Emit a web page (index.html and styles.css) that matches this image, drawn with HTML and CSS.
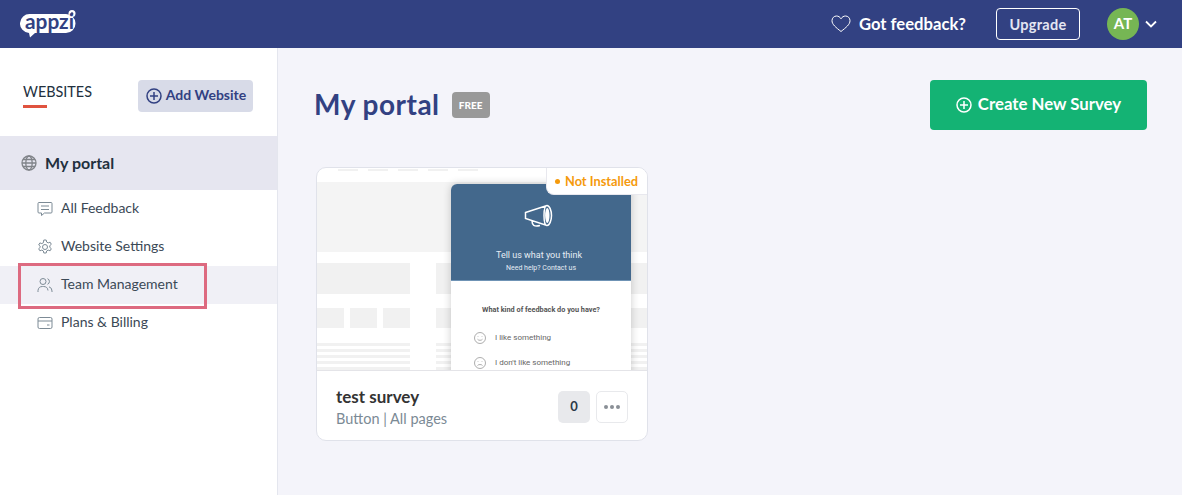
FILE: index.html
```html
<!DOCTYPE html>
<html lang="en">
<head>
    <meta charset="UTF-8">
    <title>My portal</title>
    <link rel="stylesheet" href="styles.css">
</head>
<body>
    <header class="topbar">
        <svg class="logo" viewBox="0 0 58 30">
            <path d="M10 5h36a9.500 9.500 0 0 1 9.500 9.500v0a9.500 9.500 0 0 1-9.500 9.500H15l-5 4.500-1-4.500a9.500 9.500 0 0 1 1-19z" fill="#fff"/>
            <circle cx="52" cy="4.500" r="3.500" fill="#fff"/>
            <circle cx="52" cy="4.500" r="1.300" fill="#324182"/>
            <text x="5" y="19.500" class="logo-text" textLength="49" lengthAdjust="spacingAndGlyphs">appzi</text>
        </svg>
        <div class="topbar-right">
            <svg class="heart" viewBox="0 0 20 18"><path d="M10 16.500C5 12.500 1 9.500 1 5.700 1 3 3 1 5.500 1 7.300 1 9 2 10 3.800 11 2 12.700 1 14.500 1 17 1 19 3 19 5.700c0 3.800-4 6.800-9 10.800z"/></svg>
            <span class="feedback">Got feedback?</span>
            <a class="upgrade">Upgrade</a>
            <span class="avatar">AT</span>
            <svg class="chevron" viewBox="0 0 12 8"><path d="M1 1.500l5 5 5-5"/></svg>
        </div>
    </header>

    <div class="layout">
        <aside class="sidebar">
            <div class="side-head">
                <h2 class="side-title">WEBSITES</h2>
                <a class="add-site">
                    <svg class="plus" viewBox="0 0 16 16"><circle cx="8" cy="8" r="7"/><path d="M8 4v8M4 8h8"/></svg>
                    <span>Add Website</span>
                </a>
            </div>
            <div class="site">
                <svg class="globe" viewBox="0 0 16 16"><circle cx="8" cy="8" r="7"/><ellipse cx="8" cy="8" rx="3.200" ry="7"/><path d="M1 8h14M2 4.500h12M2 11.500h12"/></svg>
                <span>My portal</span>
            </div>
            <nav class="side-nav">
                <a class="nav-item">
                    <svg class="nav-icon" viewBox="0 0 16 16"><path d="M2 1.500h12a1 1 0 0 1 1 1v8.500a1 1 0 0 1-1 1H7.500l-3 2.500v-2.500H2a1 1 0 0 1-1-1V2.500a1 1 0 0 1 1-1zM4 5h8M4 8.500h8"/></svg>
                    <span>All Feedback</span>
                </a>
                <a class="nav-item">
                    <svg class="nav-icon" viewBox="0 0 16 16"><circle cx="8" cy="8" r="2.500"/><path d="M6.800 1h2.400l.4 2 1.600.9 1.900-.7 1.200 2.100-1.500 1.300v1.800l1.500 1.300-1.200 2.100-1.900-.7-1.600.9-.4 2H6.800l-.4-2-1.600-.9-1.900.7-1.200-2.100 1.500-1.300V7.300L1.700 6l1.200-2.100 1.900.7 1.600-.9z"/></svg>
                    <span>Website Settings</span>
                </a>
                <a class="nav-item active">
                    <svg class="nav-icon" viewBox="0 0 16 16"><circle cx="6" cy="4.500" r="3"/><path d="M1 15v-1.500A4.500 4.500 0 0 1 5.500 9.500h1a4.500 4.500 0 0 1 4.500 4M10.500 1.700a3 3 0 0 1 0 5.600M12 9.800a4.300 4.300 0 0 1 3 4.200v1"/></svg>
                    <span>Team Management</span>
                </a>
                <a class="nav-item">
                    <svg class="nav-icon" viewBox="0 0 16 16"><rect x="1" y="2.500" width="14" height="11" rx="1.500"/><path d="M1 6h14M10 10h2.500"/></svg>
                    <span>Plans &amp; Billing</span>
                </a>
            </nav>
        </aside>

        <main class="content">
            <div class="page-head">
                <h1 class="page-title">My portal</h1>
                <span class="plan">FREE</span>
                <a class="create">
                    <svg class="plus" viewBox="0 0 16 16"><circle cx="8" cy="8" r="7"/><path d="M8 4v8M4 8h8"/></svg>
                    <span>Create New Survey</span>
                </a>
            </div>

            <section class="card">
                <div class="preview">
                    <!-- page skeleton behind the popup -->
                    <svg class="skeleton" viewBox="0 0 330 202">
                        <g fill="#f1f1f1">
                            <rect x="21" y="1" width="20" height="2"/>
                            <rect x="51" y="1" width="20" height="2"/>
                            <rect x="81" y="1" width="20" height="2"/>
                            <rect x="111" y="1" width="20" height="2"/>
                            <rect x="141" y="1" width="20" height="2"/>
                            <rect x="0" y="14" width="330" height="70" fill="#f4f4f4"/>
                            <rect x="0" y="95" width="93" height="31"/>
                            <rect x="119" y="95" width="211" height="31"/>
                            <rect x="0" y="140" width="27" height="20"/>
                            <rect x="33" y="140" width="27" height="20"/>
                            <rect x="66" y="140" width="27" height="20"/>
                            <rect x="119" y="140" width="211" height="20"/>
                            <rect x="0" y="175" width="93" height="3"/>
                            <rect x="0" y="181" width="93" height="3"/>
                            <rect x="0" y="187" width="93" height="3"/>
                            <rect x="0" y="193" width="93" height="3"/>
                            <rect x="0" y="199" width="93" height="3"/>
                            <rect x="119" y="175" width="211" height="3"/>
                            <rect x="119" y="181" width="211" height="3"/>
                            <rect x="119" y="187" width="211" height="3"/>
                            <rect x="119" y="193" width="211" height="3"/>
                            <rect x="119" y="199" width="211" height="3"/>
                        </g>
                    </svg>
                    <div class="popup">
                        <div class="popup-top">
                            <svg class="megaphone" viewBox="0 0 30 26"><path d="M1.500 8.500L23 1.500c2.500 0 4.500 5 4.500 10s-2 10-4.500 10L1.500 14.500zM23 1.500c-2 0-3 5-3 10s1 10 3 10M8 17c0 4 2 6 8 4.500"/><ellipse cx="23.300" cy="11.500" rx="2.200" ry="7.500" class="mega-fill"/></svg>
                            <p class="popup-title">Tell us what you think</p>
                            <p class="popup-help">Need help? Contact us</p>
                        </div>
                        <div class="popup-body">
                            <p class="popup-q">What kind of feedback do you have?</p>
                            <div class="popup-opt">
                                <svg class="smile" viewBox="0 0 12 12"><circle cx="6" cy="6" r="5.500"/><path d="M3.500 7.200c1 1.500 4 1.500 5 0M4 4.300v.6M8 4.300v.6"/></svg>
                                <span>I like something</span>
                            </div>
                            <div class="popup-opt">
                                <svg class="smile" viewBox="0 0 12 12"><circle cx="6" cy="6" r="5.500"/><path d="M3.500 8.500c1-1.300 4-1.300 5 0M4 4.300v.6M8 4.300v.6"/></svg>
                                <span>I don't like something</span>
                            </div>
                        </div>
                    </div>
                    <span class="status"><i class="status-dot"></i>Not Installed</span>
                </div>
                <div class="card-foot">
                    <div class="card-info">
                        <h3 class="card-name">test survey</h3>
                        <p class="card-meta">Button | All pages</p>
                    </div>
                    <span class="count">0</span>
                    <a class="more"><i></i><i></i><i></i></a>
                </div>
            </section>
        </main>
    </div>
</body>
</html>
```

FILE: styles.css
```css
*,*::before,*::after{
    box-sizing: border-box;
}

html,body{
    height: 100%;
}

body{
    margin: 0;
    display: flex;
    flex-direction: column;
    font-family: "Lato", "Noto Sans", sans-serif;
    color: #2b3a48;
    background: #f4f4fa;
    overflow: hidden;
}

h1,h2,h3,p{
    margin: 0;
    font-weight: normal;
}

/* top bar */
.topbar{
    height: 48px;
    flex: none;
    display: flex;
    align-items: center;
    justify-content: space-between;
    padding: 0 25px 0 20px;
    background: #324182;
    color: #fff;
}

.logo{
    width: 58px;
    height: 30px;
    margin-top: -1px;
}

.logo-text{
    font-family: "Lato", sans-serif;
    font-weight: 700;
    font-size: 21px;
    fill: #324182;
}

.topbar-right{
    display: flex;
    align-items: center;
}

.heart{
    width: 20px;
    height: 18px;
    fill: none;
    stroke: #fff;
    stroke-width: 1;
}

.feedback{
    margin-left: 8px;
    font-size: 16.650px;
    font-weight: 700;
}

.upgrade{
    width: 84px;
    height: 32px;
    margin-left: 30px;
    border: 1px solid #fff;
    border-radius: 4px;
    font-size: 14.500px;
    font-weight: 700;
    letter-spacing: .3px;
    line-height: 31px;
    text-align: center;
    color: #e4e6f2;
}

.avatar{
    width: 32px;
    height: 32px;
    margin-left: 27px;
    border-radius: 50%;
    background: #76b654;
    font-size: 15px;
    font-weight: 700;
    line-height: 30px;
    text-align: center;
}

.chevron{
    width: 12px;
    height: 8px;
    margin-left: 6px;
    fill: none;
    stroke: #fff;
    stroke-width: 1.800;
}

.layout{
    flex: 1;
    display: flex;
    min-height: 0;
}

/* sidebar */
.sidebar{
    width: 278px;
    flex: none;
    background: #fff;
    border-right: 1px solid #e4e6ee;
}

.side-head{
    height: 88px;
    display: flex;
    justify-content: space-between;
    align-items: flex-start;
    padding: 32px 24px 0 23px;
}

.side-title{
    padding: 2px 0 7px;
    font-size: 14.400px;
    line-height: 19px;
    color: #22303e;
}

.side-title::after{
    content: '';
    display: block;
    width: 24px;
    height: 3px;
    margin-top: 4px;
    background: #e0533f;
}

.add-site{
    width: 115px;
    height: 32px;
    display: flex;
    align-items: center;
    justify-content: center;
    gap: 4px;
    padding-left: 1px;
    border-radius: 4px;
    background: #d8dbe8;
    color: #324182;
    font-size: 14px;
    font-weight: 700;
}

.add-site span,
.nav-item span{
    padding-bottom: 3px;
}

.plus{
    width: 16px;
    height: 16px;
    flex: none;
    fill: none;
    stroke: currentColor;
    stroke-width: 1.500;
}

.site{
    height: 54px;
    display: flex;
    align-items: center;
    gap: 8px;
    padding-left: 21px;
    background: #e6e6f0;
    font-size: 16px;
    font-weight: 700;
    color: #22303e;
}

.site span{
    padding-bottom: 2px;
}

.globe{
    width: 16px;
    height: 16px;
    fill: none;
    stroke: #808489;
    stroke-width: 1.300;
}

.nav-item{
    height: 38px;
    display: flex;
    align-items: center;
    gap: 8px;
    padding-left: 37px;
    font-size: 14px;
    color: #3b4956;
    position: relative;
}

.nav-icon{
    width: 16px;
    height: 16px;
    flex: none;
    fill: none;
    stroke: #7d8b96;
    stroke-width: 1;
}

.nav-item.active{
    background: #f0f0f6;
}

/* red box drawn over the screenshot */
.nav-item.active::after{
    content: '';
    position: absolute;
    left: 18px;
    top: -3px;
    width: 189px;
    height: 46px;
    border: 3px solid #dd6a80;
}

/* main */
.content{
    flex: 1;
    padding: 32px 35px 0 36px;
}

.page-head{
    height: 50px;
    display: flex;
    align-items: center;
}

.page-title{
    margin-top: -2px;
    font-size: 28px;
    font-weight: 700;
    color: #324182;
    letter-spacing: .5px;
}

.plan{
    width: 38px;
    height: 26px;
    margin-left: 12px;
    border-radius: 4px;
    background: #999;
    color: #fff;
    font-size: 10px;
    font-weight: 900;
    line-height: 26px;
    text-align: center;
}

.create{
    width: 217px;
    height: 50px;
    margin-left: auto;
    display: flex;
    align-items: center;
    justify-content: center;
    gap: 6px;
    border-radius: 4px;
    background: #14b374;
    color: #fff;
    font-size: 16.800px;
    font-weight: 700;
}

.create span{
    padding-bottom: 3px;
}

/* survey card */
.card{
    width: 332px;
    height: 274px;
    margin: 37px 0 0 2px;
    border: 1px solid #e0e2ea;
    border-radius: 10px;
    background: #fff;
    overflow: hidden;
}

.preview{
    height: 203px;
    position: relative;
    overflow: hidden;
    border-bottom: 1px solid #e4e4e8;
}

.skeleton{
    display: block;
    width: 330px;
    height: 202px;
}

.popup{
    position: absolute;
    left: 134px;
    top: 16px;
    width: 180px;
    height: 200px;
    border-radius: 6px 6px 0 0;
    background: #fff;
    box-shadow: 0 0 8px rgba(0,0,0,.2);
    font-family: "Roboto", sans-serif;
    overflow: hidden;
}

.popup-top{
    height: 97px;
    padding-top: 20px;
    background: #43688c;
    border-bottom: 1px solid #6f93b5;
    color: #fff;
    text-align: center;
}

.megaphone{
    display: block;
    width: 30px;
    height: 26px;
    margin-left: 73px;
    fill: none;
    stroke: #fff;
    stroke-width: 1.500;
}

.mega-fill{
    fill: #fff;
    stroke: none;
}

.popup-title{
    margin-top: 20px;
    padding-right: 4px;
    font-size: 9px;
    line-height: 11px;
    color: #e6edf4;
}

.popup-help{
    margin-top: 3px;
    font-size: 7px;
    line-height: 9px;
    color: #e6edf4;
}

.popup-body{
    padding-top: 24px;
}

.popup-q{
    font-size: 7.300px;
    font-weight: 700;
    line-height: 10px;
    text-align: center;
    color: #555;
}

.popup-opt{
    height: 25px;
    display: flex;
    align-items: center;
    gap: 9px;
    padding-left: 23px;
    font-size: 8px;
    color: #666;
}

.popup-q + .popup-opt{
    margin-top: 10px;
}

.smile{
    width: 12px;
    height: 12px;
    flex: none;
    fill: none;
    stroke: #777;
    stroke-width: .6;
}

.status{
    position: absolute;
    right: 0;
    top: 0;
    height: 27px;
    padding: 0 9px 0 8px;
    display: flex;
    align-items: center;
    gap: 5px;
    border: solid #e8e8ee;
    border-width: 0 0 1px 1px;
    border-radius: 0 0 0 8px;
    background: #fff;
    color: #f59a0c;
    font-size: 12.800px;
    font-weight: 700;
}

.status-dot{
    width: 5px;
    height: 5px;
    border-radius: 50%;
    background: #f59a0c;
}

.card-foot{
    height: 69px;
    display: flex;
    align-items: center;
    padding: 2px 19px 0;
}

.card-info{
    flex: 1;
    padding-top: 1px;
}

.card-name{
    font-size: 17px;
    font-weight: 700;
    line-height: 20px;
    color: #333;
}

.card-meta{
    margin-top: 2px;
    font-size: 14.500px;
    line-height: 19px;
    color: #7b8a95;
}

.count{
    width: 32px;
    height: 32px;
    border-radius: 5px;
    background: #e8e9ec;
    font-size: 13px;
    font-weight: 700;
    line-height: 30px;
    text-align: center;
}

.more{
    width: 32px;
    height: 32px;
    margin-left: 6px;
    display: flex;
    align-items: center;
    justify-content: center;
    gap: 2px;
    border: 1px solid #e8e9ec;
    border-radius: 5px;
}

.more i{
    width: 4px;
    height: 4px;
    border-radius: 50%;
    background: #8a8f96;
}
```
